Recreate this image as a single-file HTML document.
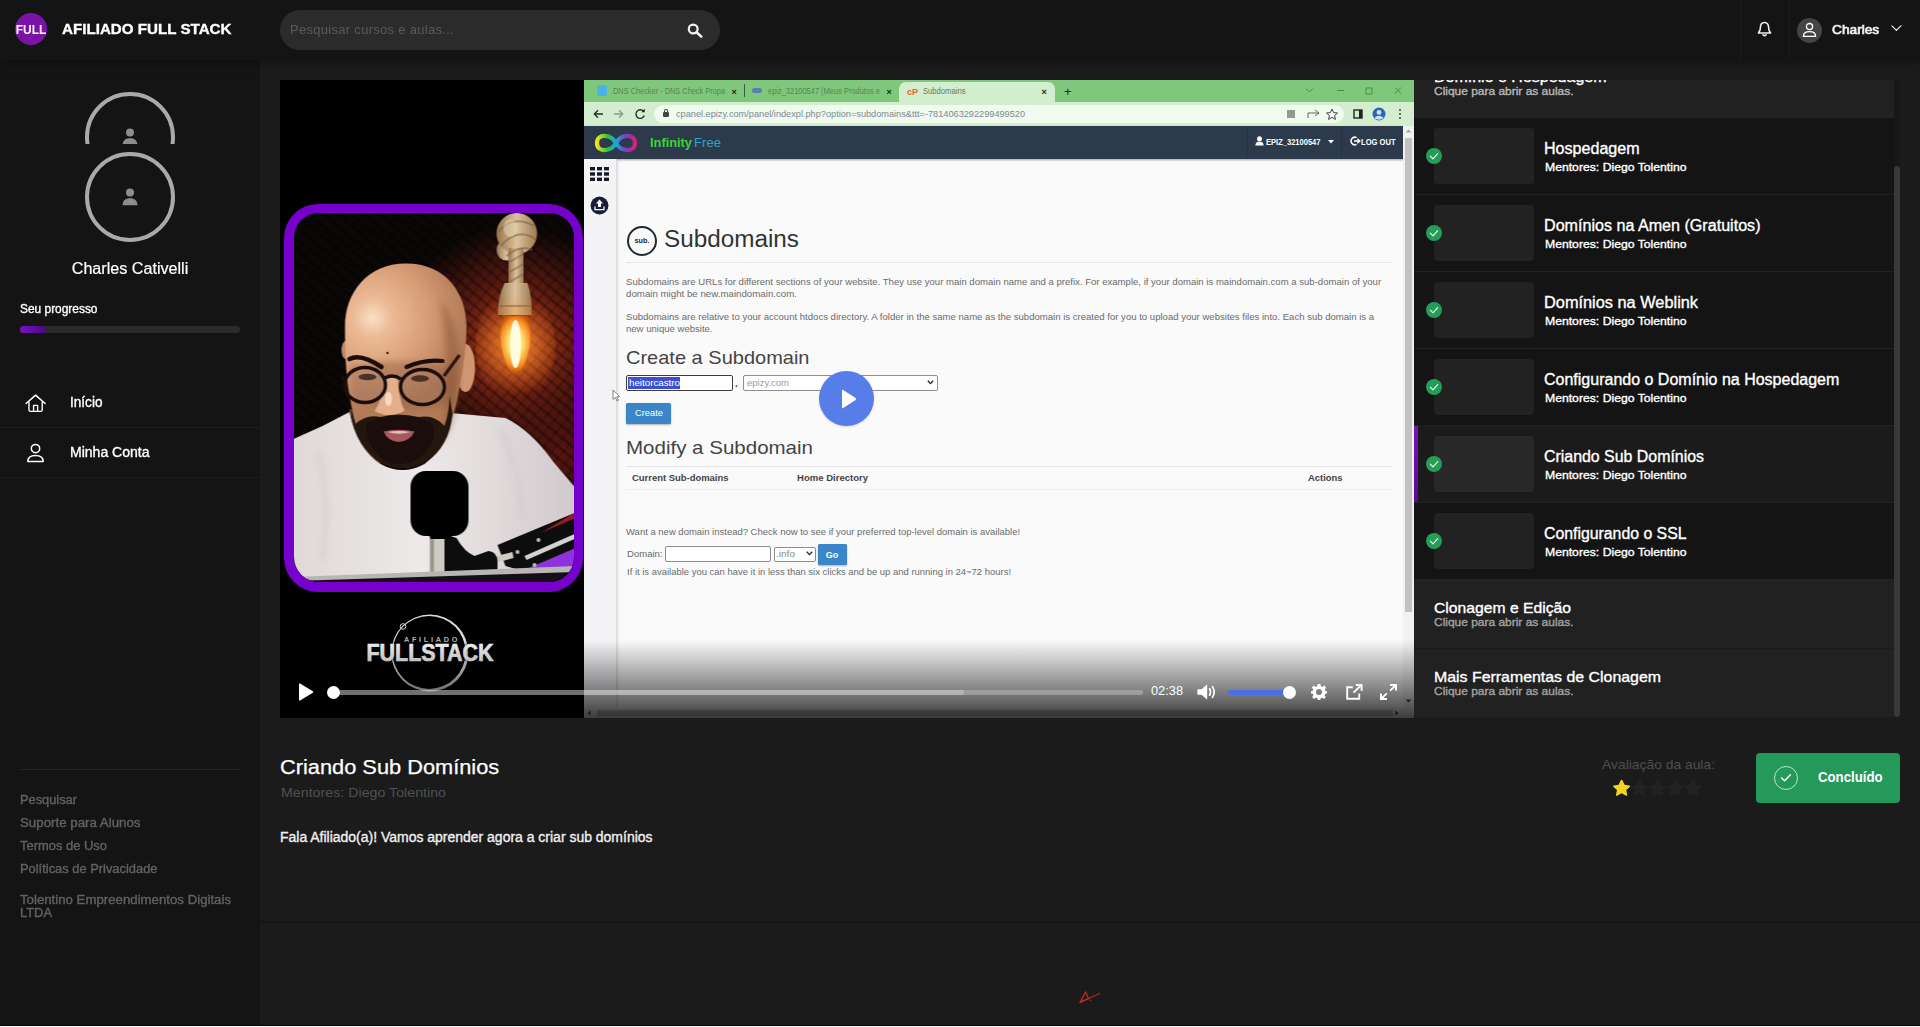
<!DOCTYPE html>
<html lang="pt-BR">
<head>
<meta charset="utf-8">
<title>Criando Sub Domínios - Afiliado Full Stack</title>
<style>
*{box-sizing:border-box}
html,body{margin:0;padding:0}
body{width:1920px;height:1027px;overflow:hidden;position:relative;background:#1b1b1b;font-family:"Liberation Sans",sans-serif;color:#fff}
.a{position:absolute}
.t{position:absolute;white-space:nowrap;line-height:1;transform-origin:0 0;display:block;-webkit-text-stroke:.35px}
.ns .t{-webkit-text-stroke:0}
svg{position:absolute;overflow:visible}
.pg{position:absolute;width:1920px;height:1027px}
</style>
</head>
<body>
<!-- main footer separator & bottom edge -->
<div class="a" style="left:260px;top:921px;width:1660px;height:2px;background:#151515"></div>
<svg style="left:1079px;top:990px" width="22" height="14" viewBox="0 0 22 14"><path d="M1 12.5 L6.5 2 L9.5 8.5 Z" fill="none" stroke="#b02a2a" stroke-width="1.5" stroke-linejoin="round"/><path d="M1 12.5 L21 3.2" stroke="#b02a2a" stroke-width="1.1"/><circle cx="11.5" cy="10.3" r=".8" fill="#b02a2a"/></svg>
<!-- HEADER -->
<header class="a" style="left:0;top:0;width:1920px;height:60px;background:#141414;box-shadow:0 2px 10px rgba(0,0,0,.35);z-index:5">
  <div class="a" style="left:15px;top:13px;width:32px;height:32px;border-radius:50%;background:#7c12a6"></div>
  <span class="t" style="left:31px;top:24px;font-size:12.5px;color:#fff;font-weight:700;-webkit-text-stroke:0;transform:translateX(-50%) scaleX(0.9551);transform-origin:50% 0;">FULL</span>
  <span class="t" style="left:62px;top:21px;font-size:15px;color:#fff;font-weight:700;-webkit-text-stroke:0;transform:scaleX(1.0104);-webkit-text-stroke:.35px;">AFILIADO FULL STACK</span>
  <div class="a" style="left:280px;top:10px;width:440px;height:40px;border-radius:20px;background:#2b2b2b"></div>
  <span class="t" style="left:290px;top:23px;font-size:13px;color:#5a5a5a;letter-spacing:0.3px;transform:scaleX(0.9989);-webkit-text-stroke:0;">Pesquisar cursos e aulas...</span>
  <svg style="left:687px;top:23px" width="16" height="15" viewBox="0 0 16 15"><circle cx="6.2" cy="6" r="4.4" fill="none" stroke="#f4f4f4" stroke-width="2.2"/><path d="M9.6 9.2 L14.3 13.6" stroke="#f4f4f4" stroke-width="2.6" stroke-linecap="round"/></svg>
  <div class="a" style="left:1740px;top:0;width:1px;height:60px;background:#1d1d1d"></div>
  <div class="a" style="left:1789px;top:0;width:1px;height:60px;background:#1d1d1d"></div>
  <svg style="left:1756.5px;top:20.6px" width="15" height="16.5" viewBox="0 0 16 18"><path d="M8 1.6 C4.7 1.6 3.5 4.4 3.5 7.4 C3.5 10.4 2.8 11.6 1.4 13 L14.6 13 C13.2 11.6 12.5 10.4 12.5 7.4 C12.5 4.4 11.3 1.6 8 1.6 Z" fill="none" stroke="#f2f2f2" stroke-width="1.7" stroke-linejoin="round"/><path d="M6.3 15 Q8 17 9.7 15" fill="none" stroke="#f2f2f2" stroke-width="1.7" stroke-linecap="round"/></svg>
  <div class="a" style="left:1797px;top:18px;width:25px;height:25px;border-radius:50%;background:#444"></div>
  <svg style="left:1802px;top:22px" width="15" height="16" viewBox="0 0 15 16"><circle cx="7.5" cy="4.6" r="3.1" fill="none" stroke="#fff" stroke-width="1.3"/><path d="M1.4 14.4 C1.4 10.9 4 9.6 7.5 9.6 C11 9.6 13.6 10.9 13.6 14.4 Z" fill="none" stroke="#fff" stroke-width="1.3" stroke-linejoin="round"/></svg>
  <span class="t" style="left:1831.7px;top:24px;font-size:12px;color:#f0f0f0;transform:scaleX(1.1415);-webkit-text-stroke:.65px;">Charles</span>
  <svg style="left:1890.6px;top:25.3px" width="10.8" height="7.2" viewBox="0 0 12 8"><path d="M1 1 L6 6 L11 1" fill="none" stroke="#f2f2f2" stroke-width="1.3" stroke-linecap="round" stroke-linejoin="round"/></svg>
</header>
<!-- SIDEBAR -->
<aside class="a" style="left:0;top:60px;width:260px;height:967px;background:#141414;z-index:2">
 <div class="pg" style="left:0;top:-60px">
  <div class="a" style="left:85px;top:92px;width:90px;height:52px;overflow:hidden">
    <div class="a" style="left:0;top:0;width:90px;height:90px;border-radius:50%;border:4px solid #a9a9a9"></div>
    <svg style="left:37px;top:36px" width="16" height="18" viewBox="0 0 16 18"><circle cx="8" cy="4.4" r="4" fill="#8d8d8d"/><path d="M0.6 17.5 C0.6 12.5 3.5 10.3 8 10.3 C12.5 10.3 15.4 12.5 15.4 17.5 Z" fill="#8d8d8d"/></svg>
  </div>
  <div class="a" style="left:85px;top:152px;width:90px;height:90px;border-radius:50%;border:4px solid #a9a9a9"></div>
  <svg style="left:122px;top:188px" width="16" height="18" viewBox="0 0 16 18"><circle cx="8" cy="4.4" r="4" fill="#8d8d8d"/><path d="M0.6 17.2 C0.6 12.5 3.5 10.3 8 10.3 C12.5 10.3 15.4 12.5 15.4 17.2 Z" fill="#8d8d8d"/></svg>
  <span class="t" style="left:130.2px;top:261px;font-size:16px;color:#fff;transform:translateX(-50%) scaleX(1.0078);transform-origin:50% 0;-webkit-text-stroke:.2px;">Charles Cativelli</span>
  <span class="t" style="left:20px;top:303px;font-size:12.5px;color:#fff;transform:scaleX(0.9533);">Seu progresso</span>
  <div class="a" style="left:20px;top:326px;width:220px;height:7px;border-radius:4px;background:#2b2b2b"></div>
  <div class="a" style="left:20px;top:326px;width:26px;height:7px;border-radius:4px 0 0 4px;background:linear-gradient(90deg,#7a10c8,#4a0a80)"></div>
  <div class="a" style="left:0;top:427px;width:260px;height:1px;background:#1e1e1e"></div>
  <div class="a" style="left:0;top:477px;width:260px;height:1px;background:#1e1e1e"></div>
  <svg style="left:24.8px;top:393.6px" width="21.2" height="18.6" viewBox="0 0 23 20"><path d="M1.2 10.2 L11.5 1.2 L21.8 10.2" fill="none" stroke="#fff" stroke-width="1.65" stroke-linecap="round" stroke-linejoin="round"/><path d="M4.3 8.2 L4.3 17 Q4.3 18.8 6.1 18.8 L16.9 18.8 Q18.7 18.8 18.7 17 L18.7 8.2" fill="none" stroke="#fff" stroke-width="1.5" stroke-linejoin="round"/><path d="M9.3 18.8 L9.3 12.3 L13.7 12.3 L13.7 18.8" fill="none" stroke="#fff" stroke-width="1.5" stroke-linejoin="round"/></svg>
  <span class="t" style="left:70px;top:395px;font-size:14px;color:#fff;transform:scaleX(0.9713);">Início</span>
  <svg style="left:26px;top:443px" width="19" height="20" viewBox="0 0 19 20"><circle cx="9.5" cy="5.6" r="4.2" fill="none" stroke="#fff" stroke-width="1.5"/><path d="M1.8 18.6 C1.8 14.2 5 12.4 9.5 12.4 C14 12.4 17.2 14.2 17.2 18.6 Z" fill="none" stroke="#fff" stroke-width="1.5" stroke-linejoin="round"/></svg>
  <span class="t" style="left:70px;top:445px;font-size:14px;color:#fff;transform:scaleX(1.0015);">Minha Conta</span>
  <div class="a" style="left:20px;top:769px;width:220px;height:1px;background:#272727"></div>
  <span class="t" style="left:20px;top:794px;font-size:12.5px;color:#626262;transform:scaleX(1.0255);">Pesquisar</span>
  <span class="t" style="left:20px;top:817px;font-size:12.5px;color:#626262;transform:scaleX(1.0638);">Suporte para Alunos</span>
  <span class="t" style="left:20px;top:840px;font-size:12.5px;color:#626262;transform:scaleX(1.0350);">Termos de Uso</span>
  <span class="t" style="left:20px;top:863px;font-size:12.5px;color:#626262;transform:scaleX(1.0307);">Políticas de Privacidade</span>
  <span class="t" style="left:20px;top:894px;font-size:12.5px;color:#626262;transform:scaleX(1.0582);">Tolentino Empreendimentos Digitais</span>
  <span class="t" style="left:20px;top:907px;font-size:12.5px;color:#626262;transform:scaleX(1.0315);">LTDA</span>
 </div>
</aside>
<div class="a" style="left:0;top:1025px;width:1920px;height:1px;background:#050505;z-index:9"></div>
<div class="a" style="left:0;top:1026px;width:1920px;height:1px;background:#fff;z-index:9"></div>
<!-- VIDEO -->
<div class="a" style="left:280px;top:80px;width:1134px;height:638px;background:#000;overflow:hidden">
 <div class="pg ns" style="left:-280px;top:-80px">
  <!-- browser screenshot -->
  <div class="a" style="left:584px;top:80px;width:830px;height:638px;background:#fafafa"></div>
  <div class="a" style="left:584px;top:80px;width:830px;height:22px;background:#7fc87b"></div>
  <div class="a" style="left:584px;top:102px;width:830px;height:24px;background:#d3edcf"></div>
  <div class="a" style="left:899px;top:82px;width:156px;height:21px;background:#d3edcf;border-radius:7px 7px 0 0"></div>
  <div class="a" style="left:654px;top:105px;width:690px;height:18px;border-radius:9px;background:#f1faef"></div>
  <!-- tabs -->
  <div class="a" style="left:597px;top:85px;width:10px;height:11px;border-radius:3px;background:#4ab3e8"></div>
  <span class="t" style="left:612.5px;top:87px;font-size:8.5px;color:#5e7d5c;transform:scaleX(0.8685);">DNS Checker - DNS Check Propa</span>
  <span class="t" style="left:731.5px;top:88px;font-size:9px;color:#1c2a1c;font-weight:700;-webkit-text-stroke:0;">×</span>
  <div class="a" style="left:744px;top:84px;width:1px;height:13px;background:#3c5c3a"></div>
  <div class="a" style="left:752px;top:88px;width:10px;height:5px;border-radius:3px;background:#5a7fb0"></div>
  <span class="t" style="left:767.5px;top:87px;font-size:8.5px;color:#5e7d5c;transform:scaleX(0.8779);">epiz_32100547 (Meus Produtos e</span>
  <span class="t" style="left:886.5px;top:88px;font-size:9px;color:#1c2a1c;font-weight:700;-webkit-text-stroke:0;">×</span>
  <span class="t" style="left:907px;top:88px;font-size:9px;color:#e8602c;font-weight:700;-webkit-text-stroke:0;">cP</span>
  <span class="t" style="left:922.5px;top:87px;font-size:8.5px;color:#5e7d5c;transform:scaleX(0.8995);">Subdomains</span>
  <span class="t" style="left:1041.5px;top:88px;font-size:9px;color:#1c2a1c;font-weight:700;-webkit-text-stroke:0;">×</span>
  <span class="t" style="left:1064px;top:85px;font-size:13px;color:#1c2a1c;">+</span>
  <svg style="left:1303px;top:86px" width="100" height="10" viewBox="0 0 100 10"><path d="M3 2.5 L6.5 6 L10 2.5 M34 4.5 L41 4.5 M63 2 L69 2 L69 8 L63 8 Z M92 1.5 L98 7.5 M98 1.5 L92 7.5" fill="none" stroke="#4f8a4c" stroke-width="1"/></svg>
  <!-- toolbar icons -->
  <svg style="left:592px;top:107px" width="56" height="14" viewBox="0 0 56 14"><path d="M11 7 L2.5 7 M6 3.2 L2.3 7 L6 10.8" fill="none" stroke="#2a2a2a" stroke-width="1.3"/><path d="M22 7 L30.5 7 M27 3.2 L30.7 7 L27 10.8" fill="none" stroke="#8a9a88" stroke-width="1.3"/><path d="M51.5 4.2 A4.3 4.3 0 1 0 52.3 8.6" fill="none" stroke="#2a2a2a" stroke-width="1.4"/><path d="M52.8 1.8 L52.8 5.2 L49.4 5.2 Z" fill="#2a2a2a"/></svg>
  <div class="a" style="left:663px;top:112px;width:6px;height:5px;border-radius:1px;background:#444"></div>
  <div class="a" style="left:664px;top:109px;width:4px;height:5px;border-radius:2px 2px 0 0;border:1px solid #444;border-bottom:0"></div>
  <span class="t" style="left:676px;top:110px;font-size:9px;color:#7b8a90;transform:scaleX(1.0203);">cpanel.epizy.com/panel/indexpl.php?option=subdomains&amp;ttt=-7814063292299499520</span>
  <svg style="left:1284px;top:107px" width="125" height="14" viewBox="0 0 125 14"><rect x="3" y="3" width="8" height="8" fill="#8f9b8f"/><path d="M24 11 L24 6 L28 6 M31 3 L35 6 L31 9 M35 6 L28 6" fill="none" stroke="#5d6a5d" stroke-width="1"/><path d="M48 2 L49.6 5.6 L53.5 6 L50.6 8.6 L51.4 12.4 L48 10.4 L44.6 12.4 L45.4 8.6 L42.5 6 L46.4 5.6 Z" fill="none" stroke="#444" stroke-width="1"/><rect x="70" y="3" width="8" height="8" fill="none" stroke="#222" stroke-width="1.4"/><rect x="75" y="3" width="3" height="8" fill="#222"/><circle cx="95" cy="7" r="6.5" fill="#2b66b8"/><circle cx="95" cy="5.4" r="2.4" fill="#cfe0f5"/><path d="M90.4 11 Q95 6.4 99.6 11 Q95 14.4 90.4 11 Z" fill="#cfe0f5"/><circle cx="116" cy="3" r="1" fill="#444"/><circle cx="116" cy="7" r="1" fill="#444"/><circle cx="116" cy="11" r="1" fill="#444"/></svg>
  <!-- cpanel navbar -->
  <div class="a" style="left:584px;top:126px;width:819px;height:33px;background:#2c3a4b;box-shadow:0 1px 2px rgba(0,0,0,.35)"></div>
  <svg style="left:593px;top:131px" width="46" height="24" viewBox="0 0 46 24"><defs><linearGradient id="inf" x1="0" x2="1"><stop offset="0" stop-color="#f2e21a"/><stop offset=".28" stop-color="#2fc23a"/><stop offset=".5" stop-color="#1aa6e0"/><stop offset=".75" stop-color="#7a3fc0"/><stop offset="1" stop-color="#d81f7a"/></linearGradient></defs><path d="M23 12 C18 3 4 2 4 12 C4 22 18 21 23 12 C28 3 42 2 42 12 C42 22 28 21 23 12 Z" fill="none" stroke="url(#inf)" stroke-width="4.2"/></svg>
  <span class="t" style="left:650px;top:137px;font-size:12.5px;color:#3fd23a;font-weight:700;-webkit-text-stroke:0;transform:scaleX(1.0252);">Infinity</span>
  <span class="t" style="left:694px;top:137px;font-size:12.5px;color:#2aa6c8;transform:scaleX(1.0505);">Free</span>
  <div class="a" style="left:1247px;top:127px;width:1px;height:31px;background:#263342"></div>
  <div class="a" style="left:1341px;top:127px;width:1px;height:31px;background:#263342"></div>
  <svg style="left:1255px;top:136px" width="9" height="10" viewBox="0 0 9 10"><circle cx="4.5" cy="2.8" r="2.5" fill="#fff"/><path d="M0.3 9.6 Q0.6 5.6 4.5 5.6 Q8.4 5.6 8.7 9.6 Z" fill="#fff"/></svg>
  <span class="t" style="left:1265.5px;top:138px;font-size:8.5px;color:#fff;font-weight:700;-webkit-text-stroke:0;transform:scaleX(0.8872);">EPIZ_32100547</span>
  <svg style="left:1328px;top:140px" width="6" height="4" viewBox="0 0 6 4"><path d="M0 0 L6 0 L3 3.6 Z" fill="#fff"/></svg>
  <svg style="left:1350px;top:136px" width="10" height="10" viewBox="0 0 10 10"><path d="M6.5 1.6 A3.8 3.8 0 1 0 6.5 8.4" fill="none" stroke="#fff" stroke-width="1.6"/><path d="M4 5 L9.6 5 M7.4 2.8 L9.8 5 L7.4 7.2" fill="none" stroke="#fff" stroke-width="1.4"/></svg>
  <span class="t" style="left:1360.5px;top:138px;font-size:8.5px;color:#fff;font-weight:700;-webkit-text-stroke:0;transform:scaleX(0.8911);">LOG OUT</span>
  <!-- left rail -->
  <div class="a" style="left:584px;top:159px;width:33px;height:549px;background:#f4f3f6;border-right:1px solid #dedde0;box-shadow:1px 0 2px rgba(0,0,0,.12)"></div>
  <svg style="left:590px;top:166px" width="19" height="16" viewBox="0 0 19 16"><g fill="#151b26"><rect x="0" y="1" width="5" height="3.4"/><rect x="7" y="1" width="5" height="3.4"/><rect x="14" y="1" width="5" height="3.4"/><rect x="0" y="6.3" width="5" height="3.4"/><rect x="7" y="6.3" width="5" height="3.4"/><rect x="14" y="6.3" width="5" height="3.4"/><rect x="0" y="11.6" width="5" height="3.4"/><rect x="7" y="11.6" width="5" height="3.4"/><rect x="14" y="11.6" width="5" height="3.4"/></g></svg>
  <svg style="left:590px;top:196px" width="19" height="19" viewBox="0 0 19 19"><circle cx="9.5" cy="9.5" r="9" fill="#1b1c3a"/><path d="M9.5 3.4 L13 7.6 L11 7.6 L11 11 L8 11 L8 7.6 L6 7.6 Z" fill="#fff"/><path d="M5 10.5 L5 13.6 L14 13.6 L14 10.5" fill="none" stroke="#fff" stroke-width="1.3"/></svg>
  <!-- page content -->
  <div class="a" style="left:627px;top:226px;width:30px;height:30px;border-radius:50%;border:2.2px solid #1e2a30"></div>
  <span class="t" style="left:642px;top:237px;font-size:7.5px;color:#1e2a30;font-weight:700;-webkit-text-stroke:0;transform:translateX(-50%) scaleX(0.9728);transform-origin:50% 0;">sub.</span>
  <span class="t" style="left:664px;top:228px;font-size:23.5px;color:#333;transform:scaleX(1.0334);">Subdomains</span>
  <div class="a" style="left:626px;top:262px;width:767px;height:1px;background:#e6e6e6"></div>
  <span class="t" style="left:626.3px;top:278px;font-size:9px;color:#6b6b6b;transform:scaleX(1.0620);">Subdomains are URLs for different sections of your website. They use your main domain name and a prefix. For example, if your domain is maindomain.com a sub-domain of your</span>
  <span class="t" style="left:626.3px;top:290px;font-size:9px;color:#6b6b6b;transform:scaleX(1.0784);">domain might be new.maindomain.com.</span>
  <span class="t" style="left:626.3px;top:313px;font-size:9px;color:#6b6b6b;transform:scaleX(1.0623);">Subdomains are relative to your account htdocs directory. A folder in the same name as the subdomain is created for you to upload your websites files into. Each sub domain is a</span>
  <span class="t" style="left:626.3px;top:325px;font-size:9px;color:#6b6b6b;transform:scaleX(1.0607);">new unique website.</span>
  <span class="t" style="left:626.3px;top:348px;font-size:19px;color:#444;transform:scaleX(1.0529);">Create a Subdomain</span>
  <div class="a" style="left:626px;top:375px;width:107px;height:15.5px;border:1.5px solid #3c3c3c;border-radius:2px;background:#fff"></div>
  <div class="a" style="left:628px;top:377px;width:52px;height:11.5px;background:#3c4fd0"></div>
  <span class="t" style="left:628.6px;top:379px;font-size:9px;color:#fff;transform:scaleX(1.0847);">heitorcastro</span>
  <span class="t" style="left:735px;top:379px;font-size:10px;color:#444;font-weight:700;-webkit-text-stroke:0;">.</span>
  <div class="a" style="left:743px;top:375px;width:195px;height:15.5px;border:1px solid #8f8f8f;border-radius:2px;background:#fff"></div>
  <span class="t" style="left:746.5px;top:379px;font-size:9px;color:#9a9a9a;transform:scaleX(1.0541);">epizy.com</span>
  <svg style="left:927px;top:380px" width="7" height="5" viewBox="0 0 7 5"><path d="M.8 .8 L3.5 3.6 L6.2 .8" fill="none" stroke="#222" stroke-width="1.3"/></svg>
  <svg style="left:612px;top:389px" width="9" height="13" viewBox="0 0 9 13"><path d="M1 1 L1 10.5 L3.3 8.3 L5 12 L6.3 11.4 L4.7 7.8 L7.8 7.6 Z" fill="#fff" stroke="#666" stroke-width=".8"/></svg>
  <div class="a" style="left:626px;top:402.5px;width:45px;height:21.5px;background:#3a86c8;border-radius:1.5px;box-shadow:0 1px 2px rgba(0,0,0,.3)"></div>
  <span class="t" style="left:648.5px;top:408px;font-size:9.5px;color:#fff;transform:translateX(-50%) scaleX(0.9820);transform-origin:50% 0;">Create</span>
  <span class="t" style="left:626.3px;top:438px;font-size:19px;color:#444;transform:scaleX(1.0796);">Modify a Subdomain</span>
  <div class="a" style="left:626px;top:465.5px;width:767px;height:1px;background:#e6e6e6"></div>
  <span class="t" style="left:631.5px;top:474px;font-size:9px;color:#444;font-weight:700;-webkit-text-stroke:0;transform:scaleX(1.0489);">Current Sub-domains</span>
  <span class="t" style="left:797.2px;top:474px;font-size:9px;color:#444;font-weight:700;-webkit-text-stroke:0;transform:scaleX(1.0594);">Home Directory</span>
  <span class="t" style="left:1308px;top:474px;font-size:9px;color:#444;font-weight:700;-webkit-text-stroke:0;transform:scaleX(1.0455);">Actions</span>
  <div class="a" style="left:626px;top:489px;width:767px;height:1px;background:#efefef"></div>
  <span class="t" style="left:626.3px;top:528px;font-size:9px;color:#6b6b6b;transform:scaleX(1.0540);">Want a new domain instead? Check now to see if your preferred top-level domain is available!</span>
  <span class="t" style="left:626.5px;top:550px;font-size:9px;color:#6a6a6a;transform:scaleX(1.0594);">Domain:</span>
  <div class="a" style="left:664.5px;top:546.3px;width:106.5px;height:15.5px;border:1px solid #8c8c8c;border-radius:2px;background:#fff"></div>
  <div class="a" style="left:773.5px;top:546.5px;width:42.5px;height:15px;border:1px solid #8c8c8c;border-radius:2px;background:#fff"></div>
  <span class="t" style="left:776px;top:550px;font-size:9px;color:#8a8a8a;transform:scaleX(1.1170);">.info</span>
  <svg style="left:806px;top:551px" width="7" height="5" viewBox="0 0 7 5"><path d="M.8 .8 L3.5 3.6 L6.2 .8" fill="none" stroke="#222" stroke-width="1.3"/></svg>
  <div class="a" style="left:817.8px;top:543.8px;width:29px;height:21.7px;background:#3a86c8;border-radius:1.5px;box-shadow:0 1px 2px rgba(0,0,0,.3)"></div>
  <span class="t" style="left:832.3px;top:550px;font-size:9.5px;color:#fff;font-weight:700;-webkit-text-stroke:0;transform:translateX(-50%) scaleX(0.9475);transform-origin:50% 0;">Go</span>
  <span class="t" style="left:626.5px;top:568px;font-size:9px;color:#6b6b6b;transform:scaleX(1.0508);">If it is available you can have it in less than six clicks and be up and running in 24~72 hours!</span>
  <!-- scrollbars -->
  <div class="a" style="left:1403px;top:126px;width:11px;height:592px;background:#f1f1f1"></div>
  <div class="a" style="left:1405px;top:138px;width:7px;height:474px;background:#c2c2c2"></div>
  <svg style="left:1405px;top:129px" width="7" height="4" viewBox="0 0 7 4"><path d="M0.5 3.6 L3.5 .4 L6.5 3.6 Z" fill="#a5a5a5"/></svg>
  <div class="a" style="left:584px;top:708px;width:819px;height:10px;background:#f1f1f1"></div>
  <div class="a" style="left:597px;top:710px;width:796px;height:6px;background:#c2c2c2"></div>
  <svg style="left:587px;top:710px" width="4" height="6" viewBox="0 0 4 6"><path d="M3.6 .4 L.4 3 L3.600 5.600 Z" fill="#505050"/></svg>
  <svg style="left:1395px;top:710px" width="4" height="6" viewBox="0 0 4 6"><path d="M.4 .4 L3.600 3 L.4 5.600 Z" fill="#505050"/></svg>
  <svg style="left:1405px;top:699px" width="7" height="4" viewBox="0 0 7 4"><path d="M0.5 .4 L3.5 3.6 L6.5 .4 Z" fill="#505050"/></svg>
  <!-- webcam frame -->
  <div class="a" style="left:284px;top:204px;width:299px;height:388px;border-radius:34px;background:#7600cc"></div>
  <div class="a" style="left:293.5px;top:213px;width:280.5px;height:369px;border-radius:25px;overflow:hidden;background:#0a0706">
   <svg style="left:0;top:0" width="280.5" height="369" viewBox="293.5 213 280.5 369">
    <defs>
     <radialGradient id="wg" cx="515" cy="345" r="120" gradientUnits="userSpaceOnUse"><stop offset="0" stop-color="#c04a1c"/><stop offset=".25" stop-color="#8e2c16"/><stop offset=".5" stop-color="#5c1a10"/><stop offset=".8" stop-color="#2c0e0b"/><stop offset="1" stop-color="#0a0706"/></radialGradient>
     <radialGradient id="wg2" cx="560" cy="455" r="80" gradientUnits="userSpaceOnUse"><stop offset="0" stop-color="#5a1610"/><stop offset="1" stop-color="#5a1610" stop-opacity="0"/></radialGradient>
     <pattern id="tx" width="9" height="9" patternUnits="userSpaceOnUse" patternTransform="rotate(40)"><rect width="9" height="9" fill="none"/><rect width="9" height="3" fill="#000" opacity=".28"/><rect width="3" height="9" fill="#000" opacity=".14"/></pattern>
     <radialGradient id="sk" cx="372" cy="318" r="95" gradientUnits="userSpaceOnUse"><stop offset="0" stop-color="#fbe0c6"/><stop offset=".2" stop-color="#ecbb96"/><stop offset=".55" stop-color="#d89f78"/><stop offset="1" stop-color="#b27a57"/></radialGradient>
     <linearGradient id="sh" x1="0" x2="1" y1="0" y2="0"><stop offset="0" stop-color="#dfd9d9"/><stop offset=".45" stop-color="#eeeae9"/><stop offset="1" stop-color="#d2c9cc"/></linearGradient>
     <radialGradient id="bl" cx="515" cy="343" r="30" gradientUnits="userSpaceOnUse" gradientTransform="translate(515 343) scale(.62 1) translate(-515 -343)"><stop offset="0" stop-color="#fffbd8"/><stop offset=".45" stop-color="#ffd862"/><stop offset=".8" stop-color="#f68a24"/><stop offset="1" stop-color="#c0500e"/></radialGradient>
     <radialGradient id="gl" cx="515" cy="346" r="50" gradientUnits="userSpaceOnUse"><stop offset="0" stop-color="#ff9a3a" stop-opacity=".85"/><stop offset="1" stop-color="#ff7a20" stop-opacity="0"/></radialGradient>
     <linearGradient id="rp" x1="0" x2="1"><stop offset="0" stop-color="#94744e"/><stop offset=".5" stop-color="#dcc29c"/><stop offset="1" stop-color="#9a7a54"/></linearGradient>
     <filter id="b1" x="-10%" y="-10%" width="120%" height="120%"><feGaussianBlur stdDeviation=".7"/></filter>
     <filter id="b3" x="-20%" y="-20%" width="140%" height="140%"><feGaussianBlur stdDeviation="3"/></filter>
    </defs>
    <rect x="293" y="212" width="282" height="371" fill="#0a0706"/>
    <rect x="293" y="212" width="282" height="371" fill="url(#wg)"/>
    <rect x="293" y="212" width="282" height="371" fill="url(#wg2)"/>
    <rect x="293" y="212" width="282" height="371" fill="url(#tx)"/>
    <g filter="url(#b1)">
     <!-- rope -->
     <ellipse cx="506" cy="250" rx="10" ry="10.5" fill="url(#rp)"/>
     <ellipse cx="516.3" cy="233.5" rx="20.3" ry="20.5" fill="url(#rp)"/>
     <rect x="508" y="248" width="15" height="38" fill="url(#rp)"/>
     <path d="M504 283 L527 283 Q532 298 531 315 L497.500 315 Q497 298 504 283 Z" fill="url(#rp)"/>
     <path d="M498 232 Q512 214 534 226 M500 246 Q518 226 536 240 M506 256 Q520 244 532 250 M509 262 L523 254 M509 272 L523 264 M509 282 L523 274 M499 306 L530 306" stroke="#7a5c3a" stroke-width="2" fill="none" opacity=".55"/>
     <ellipse cx="510" cy="228" rx="7" ry="9" fill="#ecd6b4" opacity=".5"/>
     <!-- bulb -->
     <ellipse cx="515" cy="346" rx="40" ry="56" fill="url(#gl)"/>
     <path d="M503 316 Q498 330 500.500 345 Q504 364 511 373.500 L519 373.500 Q526 364 529.500 345 Q532 330 527 316 Z" fill="url(#bl)"/>
     <ellipse cx="515" cy="344" rx="5.500" ry="24" fill="#fffce0"/>
     <!-- shirt -->
     <path d="M293 439 L322 426 L349 412 Q356 448 380 464 Q402 476 424 464 Q444 448 450 413 L505 418 Q530 430 553 462 L575 488 L575 583 L293 583 Z" fill="url(#sh)"/>
     <path d="M500 430 Q520 470 522 520 M318 450 Q330 500 322 560" stroke="#cfc6c8" stroke-width="5" fill="none" opacity=".55" filter="url(#b3)"/>
     <!-- neck shadow -->
     <path d="M349 410 Q356 448 380 464 L392 440 L360 405 Z" fill="#8a573c"/>
     <!-- ears -->
     <ellipse cx="465" cy="368" rx="9.5" ry="24" fill="#cf9670"/>
     <ellipse cx="345" cy="350" rx="4" ry="9" fill="#c08a66"/>
     <!-- head -->
     <path d="M405.5 263.5 C446 263.5 466 294 466 326 C466 352 462 372 458 392 C454 420 440 448 424 462 Q402 474 380 462 C362 448 352 420 349 395 C345 372 344.5 350 344.5 326 C344.5 294 366 263.5 405.5 263.5 Z" fill="url(#sk)"/>
     <!-- face shadows -->
     <path d="M349 366 Q400 356 456 368 L454 404 Q400 414 351 402 Z" fill="#8e5a40" opacity=".42" filter="url(#b3)"/>
     <path d="M440 300 Q466 330 456 400 Q452 430 440 446 Q452 380 440 300 Z" fill="#8a5638" opacity=".5" filter="url(#b3)"/>
     <path d="M385 376 Q381 402 374 411 Q388 419 404 411 Q398 398 397 376 Z" fill="#e9b690" opacity=".9"/>
     <ellipse cx="388" cy="399" rx="3.500" ry="7" fill="#fbe3cc" opacity=".8"/>
     <!-- beard -->
     <path d="M350 396 Q351 412 355 424 Q366 414 380 417 Q398 412 418 417 Q434 414 444 426 Q449 412 449 396 L452 414 Q449 446 426 462 Q402 474 380 463 Q356 446 351 416 Z" fill="#22130e"/>
     <path d="M366 424 Q382 414 398 417 Q416 414 432 425 Q436 444 418 458 Q400 468 384 460 Q366 446 366 424 Z" fill="#1a0e0b"/>
     <path d="M383 431.500 Q398 428 414 431.500 Q410 441 398 442 Q387 441 383 431.500 Z" fill="#a8585e"/>
     <path d="M387 432 Q398 430 410 432 Q398 435.500 387 432 Z" fill="#f0dcd4" opacity=".8"/>
     <circle cx="387" cy="353" r="1.200" fill="#3a2014"/>
     <!-- brows -->
     <path d="M349 359 Q360 353 381 367" stroke="#1c0f0b" stroke-width="4.600" fill="none" stroke-linecap="round"/>
     <path d="M406 367 Q424 359 442 361" stroke="#1c0f0b" stroke-width="4.200" fill="none" stroke-linecap="round"/>
     <!-- eyes -->
     <ellipse cx="367" cy="377" rx="9" ry="3.200" fill="#2a1810" opacity=".85"/>
     <ellipse cx="419.500" cy="378.500" rx="9" ry="3.200" fill="#2a1810" opacity=".85"/>
     <!-- glasses -->
     <ellipse cx="364.500" cy="385" rx="20.500" ry="17.500" fill="#fff" fill-opacity=".06" stroke="#1a0f0e" stroke-width="3.400"/>
     <ellipse cx="422" cy="387" rx="22" ry="17.500" fill="#fff" fill-opacity=".06" stroke="#1a0f0e" stroke-width="3.400"/>
     <path d="M384.500 378 Q392 373.500 400.500 379" stroke="#1a0f0e" stroke-width="3.400" fill="none"/>
     <path d="M443.500 376 L459 355" stroke="#2e1610" stroke-width="3.200" fill="none"/>
     <path d="M344.500 380 L341 377" stroke="#1a0f0e" stroke-width="3" fill="none"/>
     <!-- purple spill -->
     <path d="M520 572 L574 548 L575 572 Z" fill="#8f33dd"/>
     <!-- mic arm -->
     <path d="M497 545 L574 513 L575 548 L522 571 L505 566 Z" fill="#0e0c0e"/>
     <path d="M524 556 L574 534 L574 539 L526 560 Z" fill="#d6d2d2"/>
     <path d="M574 513 L575 518 L540 533 Z" fill="#c02030" opacity=".8"/>
     <path d="M480 560 L512 552 L513 558 L481 567 Z" fill="#cfcac6"/>
     <circle cx="538" cy="540" r="2" fill="#bbb"/><circle cx="517" cy="552" r="2" fill="#bbb"/><circle cx="534" cy="565" r="2" fill="#bbb"/>
     <!-- mic body -->
     <rect x="429.5" y="530" width="14.5" height="46" fill="#cfccc4"/>
     <rect x="429.5" y="530" width="4" height="46" fill="#9a968e"/>
     <path d="M444 534 L456 538 Q464 552 474 556 L488 551 Q497 552 497 562 L497 572 L444 574 Z" fill="#0b0b0b"/>
     <rect x="410" y="471" width="58" height="65" rx="15" ry="16" fill="#050505"/>
     <path d="M428 533 L452 533 L450 539 L430 539 Z" fill="#050505"/>
     <!-- desk -->
     <path d="M293 577 L575 566 L575 573 L293 584 Z" fill="#b9b5b5"/>
     <path d="M293 581 L575 572 L575 584 L293 584 Z" fill="#151015"/>
    </g>
   </svg>
  </div>
  <!-- FULLSTACK logo -->
  <svg style="left:385px;top:608px" width="90" height="90" viewBox="385 608 90 90"><path fill-rule="evenodd" fill="#dcdcdc" d="M391.3 653 a38.5 38.5 0 1 0 77 0 a38.5 38.5 0 1 0 -77 0 Z M392.6 652.4 a36.5 36.5 0 1 0 73 0 a36.5 36.5 0 1 0 -73 0 Z"/><circle cx="403" cy="626.500" r="2.800" fill="none" stroke="#cfcfcf" stroke-width="1"/></svg>
  <span class="t" style="left:431.6px;top:636px;font-size:7px;color:#b4b4b4;font-weight:700;-webkit-text-stroke:0;letter-spacing:2.6px;transform:translateX(-50%) scaleX(1.0399);transform-origin:50% 0;">AFILIADO</span>
  <span class="t" style="left:429.8px;top:642px;font-size:23.5px;color:#f4f4f4;font-weight:700;-webkit-text-stroke:0;transform:translateX(-50%) scaleX(0.9122);transform-origin:50% 0;-webkit-text-stroke:.7px #f4f4f4;text-shadow:0 0 2px #000,0 0 3px #000;">FULLSTACK</span>
  <!-- plyr controls -->
  <div class="a" style="left:280px;top:640px;width:1134px;height:78px;background:linear-gradient(180deg,rgba(0,0,0,0),rgba(0,0,0,.75))"></div>
  <svg style="left:298px;top:683px" width="16" height="18" viewBox="0 0 16 18"><path d="M1 1.2 Q1 0 2.1 .6 L14.8 8.2 Q15.8 9 14.8 9.8 L2.1 17.4 Q1 18 1 16.8 Z" fill="#fff"/></svg>
  <div class="a" style="left:333px;top:689.5px;width:810px;height:5px;border-radius:2.5px;background:rgba(255,255,255,.25)"></div>
  <div class="a" style="left:333px;top:689.5px;width:631px;height:5px;border-radius:2.5px;background:rgba(255,255,255,.25)"></div>
  <div class="a" style="left:327px;top:685.5px;width:13px;height:13px;border-radius:50%;background:#fff;box-shadow:0 1px 1px rgba(0,0,0,.2)"></div>
  <span class="t" style="left:1150.8px;top:684px;font-size:13px;color:#fff;transform:scaleX(0.9837);">02:38</span>
  <svg style="left:1197px;top:684px" width="20" height="16" viewBox="0 0 20 16"><path d="M1 5.2 L4.6 5.2 L9.4 1 Q10.2 .5 10.2 1.5 L10.2 14.5 Q10.2 15.5 9.4 15 L4.6 10.8 L1 10.8 Q.4 10.8 .4 10.2 L.4 5.8 Q.4 5.2 1 5.2 Z" fill="#fff"/><path d="M12.6 4.8 Q14.6 8 12.6 11.2" fill="none" stroke="#fff" stroke-width="1.7" stroke-linecap="round"/><path d="M15.4 2.6 Q19 8 15.4 13.4" fill="none" stroke="#fff" stroke-width="1.7" stroke-linecap="round"/></svg>
  <div class="a" style="left:1228px;top:689.8px;width:68px;height:5px;border-radius:2.5px;background:#4a6fe8"></div>
  <div class="a" style="left:1283px;top:685.5px;width:13px;height:13px;border-radius:50%;background:#fff"></div>
  <svg style="left:1311px;top:684px" width="16" height="16" viewBox="0 0 16 16"><path d="M6.6 0 L9.4 0 L9.8 2.2 L11.3 2.9 L13.2 1.6 L15.1 3.6 L13.8 5.4 L14.4 7 L16 7.2 L16 9.4 L14.2 9.8 L13.6 11.3 L14.8 13 L13 14.9 L11.2 13.7 L9.7 14.3 L9.3 16 L6.7 16 L6.3 14.3 L4.8 13.7 L3 14.9 L1.2 13 L2.4 11.3 L1.8 9.8 L0 9.4 L0 7.2 L1.6 7 L2.2 5.4 L.9 3.6 L2.8 1.6 L4.7 2.9 L6.2 2.2 Z M8 5 A3 3 0 1 0 8 11 A3 3 0 1 0 8 5 Z" fill="#fff" fill-rule="evenodd"/></svg>
  <svg style="left:1345.5px;top:684px" width="17" height="16" viewBox="0 0 17 16"><path d="M6.8 3.2 L1.2 3.2 L1.2 14.8 L13.2 14.8 L13.2 9.4" fill="none" stroke="#fff" stroke-width="1.9"/><path d="M7.6 8.6 L14.6 1.6 M9.8 1 L15.6 1 L15.6 6.8" fill="none" stroke="#fff" stroke-width="1.9"/></svg>
  <svg style="left:1379.5px;top:684px" width="17" height="16" viewBox="0 0 17 16"><path d="M10 1 L16 1 L16 6.6 M15.6 1.4 L10.2 6.6 M7 15 L1 15 L1 9.4 M1.4 14.6 L6.8 9.4" fill="none" stroke="#fff" stroke-width="1.9"/></svg>
  <!-- big play -->
  <div class="a" style="left:819.2px;top:371.2px;width:55px;height:55px;border-radius:50%;background:#577ee8;box-shadow:0 1px 2px rgba(0,0,0,.15)"></div>
  <svg style="left:840.6px;top:388.7px" width="16" height="20" viewBox="0 0 16 20"><path d="M1 1.6 Q1 .2 2.2 1 L14.6 9 Q15.6 10 14.6 11 L2.2 19 Q1 19.8 1 18.4 Z" fill="#fff"/></svg>
 </div>
</div>
<!-- LESSON PANEL -->
<div class="a" style="left:1414px;top:80px;width:486px;height:638px;background:#141414;overflow:hidden">
 <div class="pg" style="left:-1414px;top:-80px">
  <div class="a" style="left:1414px;top:80px;width:480px;height:38px;background:#212121"></div>
  <span class="t" style="left:1434px;top:69px;font-size:15px;color:#fff;transform:scaleX(1.0664);">Domínio e Hospedagem</span>
  <span class="t" style="left:1434px;top:86px;font-size:11px;color:#b8b8b8;transform:scaleX(1.0865);">Clique para abrir as aulas.</span>
  <div class="a" style="left:1414px;top:194px;width:480px;height:1px;background:#212121"></div>
  <div class="a" style="left:1434px;top:128px;width:100px;height:56px;border-radius:4px;background:#222"></div>
  <svg style="left:1426px;top:148px" width="16" height="16" viewBox="0 0 16 16"><circle cx="8" cy="8" r="8" fill="#259d58"/><path d="M4.3 8.2 L7 10.8 L11.7 5.6" fill="none" stroke="#eaf6ee" stroke-width="1.15" stroke-linecap="round" stroke-linejoin="round"/></svg>
  <span class="t" style="left:1544px;top:141px;font-size:16px;color:#fff;transform:scaleX(1.0045);">Hospedagem</span>
  <span class="t" style="left:1545px;top:162px;font-size:11.5px;color:#fff;transform:scaleX(1.0608);">Mentores: Diego Tolentino</span>
  <div class="a" style="left:1414px;top:271px;width:480px;height:1px;background:#212121"></div>
  <div class="a" style="left:1434px;top:205px;width:100px;height:56px;border-radius:4px;background:#222"></div>
  <svg style="left:1426px;top:225px" width="16" height="16" viewBox="0 0 16 16"><circle cx="8" cy="8" r="8" fill="#259d58"/><path d="M4.3 8.2 L7 10.8 L11.7 5.6" fill="none" stroke="#eaf6ee" stroke-width="1.15" stroke-linecap="round" stroke-linejoin="round"/></svg>
  <span class="t" style="left:1544px;top:218px;font-size:16px;color:#fff;transform:scaleX(1.0061);">Domínios na Amen (Gratuitos)</span>
  <span class="t" style="left:1545px;top:239px;font-size:11.5px;color:#fff;transform:scaleX(1.0608);">Mentores: Diego Tolentino</span>
  <div class="a" style="left:1414px;top:348px;width:480px;height:1px;background:#212121"></div>
  <div class="a" style="left:1434px;top:282px;width:100px;height:56px;border-radius:4px;background:#222"></div>
  <svg style="left:1426px;top:302px" width="16" height="16" viewBox="0 0 16 16"><circle cx="8" cy="8" r="8" fill="#259d58"/><path d="M4.3 8.2 L7 10.8 L11.7 5.6" fill="none" stroke="#eaf6ee" stroke-width="1.15" stroke-linecap="round" stroke-linejoin="round"/></svg>
  <span class="t" style="left:1544px;top:295px;font-size:16px;color:#fff;transform:scaleX(1.0207);">Domínios na Weblink</span>
  <span class="t" style="left:1545px;top:316px;font-size:11.5px;color:#fff;transform:scaleX(1.0608);">Mentores: Diego Tolentino</span>
  <div class="a" style="left:1414px;top:425px;width:480px;height:1px;background:#212121"></div>
  <div class="a" style="left:1434px;top:359px;width:100px;height:56px;border-radius:4px;background:#222"></div>
  <svg style="left:1426px;top:379px" width="16" height="16" viewBox="0 0 16 16"><circle cx="8" cy="8" r="8" fill="#259d58"/><path d="M4.3 8.2 L7 10.8 L11.7 5.6" fill="none" stroke="#eaf6ee" stroke-width="1.15" stroke-linecap="round" stroke-linejoin="round"/></svg>
  <span class="t" style="left:1544px;top:372px;font-size:16px;color:#fff;">Configurando o Domínio na Hospedagem</span>
  <span class="t" style="left:1545px;top:393px;font-size:11.5px;color:#fff;transform:scaleX(1.0608);">Mentores: Diego Tolentino</span>
  <div class="a" style="left:1414px;top:426px;width:480px;height:77px;background:#1b1b1b"></div>
  <div class="a" style="left:1414px;top:426px;width:4px;height:77px;background:linear-gradient(180deg,#7a12b8,#5a0a96)"></div>
  <div class="a" style="left:1414px;top:502px;width:480px;height:1px;background:#212121"></div>
  <div class="a" style="left:1434px;top:436px;width:100px;height:56px;border-radius:4px;background:#282828"></div>
  <svg style="left:1426px;top:456px" width="16" height="16" viewBox="0 0 16 16"><circle cx="8" cy="8" r="8" fill="#259d58"/><path d="M4.3 8.2 L7 10.8 L11.7 5.6" fill="none" stroke="#eaf6ee" stroke-width="1.15" stroke-linecap="round" stroke-linejoin="round"/></svg>
  <span class="t" style="left:1544px;top:449px;font-size:16px;color:#fff;transform:scaleX(0.9940);">Criando Sub Domínios</span>
  <span class="t" style="left:1545px;top:470px;font-size:11.5px;color:#fff;transform:scaleX(1.0608);">Mentores: Diego Tolentino</span>
  <div class="a" style="left:1414px;top:579px;width:480px;height:1px;background:#212121"></div>
  <div class="a" style="left:1434px;top:513px;width:100px;height:56px;border-radius:4px;background:#222"></div>
  <svg style="left:1426px;top:533px" width="16" height="16" viewBox="0 0 16 16"><circle cx="8" cy="8" r="8" fill="#259d58"/><path d="M4.3 8.2 L7 10.8 L11.7 5.6" fill="none" stroke="#eaf6ee" stroke-width="1.15" stroke-linecap="round" stroke-linejoin="round"/></svg>
  <span class="t" style="left:1544px;top:526px;font-size:16px;color:#fff;transform:scaleX(0.9889);">Configurando o SSL</span>
  <span class="t" style="left:1545px;top:547px;font-size:11.5px;color:#fff;transform:scaleX(1.0608);">Mentores: Diego Tolentino</span>
  <div class="a" style="left:1414px;top:580px;width:480px;height:138px;background:#212121"></div>
  <div class="a" style="left:1414px;top:648px;width:480px;height:1px;background:#1b1b1b"></div>
  <span class="t" style="left:1434px;top:600px;font-size:15px;color:#fff;transform:scaleX(1.0465);">Clonagem e Edição</span>
  <span class="t" style="left:1434px;top:617px;font-size:11px;color:#a2a2a2;transform:scaleX(1.0865);">Clique para abrir as aulas.</span>
  <span class="t" style="left:1434px;top:669px;font-size:15px;color:#fff;transform:scaleX(1.0595);">Mais Ferramentas de Clonagem</span>
  <span class="t" style="left:1434px;top:686px;font-size:11px;color:#a2a2a2;transform:scaleX(1.0865);">Clique para abrir as aulas.</span>
  <!-- scrollbar -->
  <div class="a" style="left:1894px;top:80px;width:6px;height:638px;background:#171717"></div>
  <div class="a" style="left:1894px;top:166px;width:6px;height:551px;border-radius:3px;background:#383838"></div>
 </div>
</div>
<div class="a" style="left:1414px;top:717px;width:486px;height:1px;background:#1b1b1b"></div>
<!-- LESSON INFO -->
<span class="t" style="left:280.3px;top:757px;font-size:20.5px;color:#fff;transform:scaleX(1.0628);-webkit-text-stroke:.25px;">Criando Sub Domínios</span>
<span class="t" style="left:281px;top:786px;font-size:13.5px;color:#505050;transform:scaleX(1.0537);-webkit-text-stroke:0;">Mentores: Diego Tolentino</span>
<span class="t" style="left:280px;top:830px;font-size:14px;color:#f0f0f0;transform:scaleX(0.9980);">Fala Afiliado(a)! Vamos aprender agora a criar sub domínios</span>
<span class="t" style="left:1601.5px;top:758px;font-size:13px;color:#4e4e4e;transform:scaleX(1.0660);-webkit-text-stroke:0;">Avaliação da aula:</span>
<svg style="left:1611.4px;top:777.6px" width="97.5" height="21.2" viewBox="0 0 92 20"><defs><path id="st" d="M10 1.6 Q10.5 1.6 10.8 2.2 L12.8 6.4 L17.4 7 Q18.6 7.3 17.8 8.2 L14.4 11.4 L15.3 16 Q15.4 17.2 14.3 16.7 L10 14.4 L5.7 16.7 Q4.6 17.2 4.7 16 L5.6 11.4 L2.2 8.2 Q1.4 7.3 2.6 7 L7.2 6.4 L9.2 2.2 Q9.5 1.6 10 1.6 Z"/></defs><use href="#st" fill="#f6d31f"/><use href="#st" x="16.9" fill="#222"/><use href="#st" x="33.8" fill="#222"/><use href="#st" x="50.7" fill="#222"/><use href="#st" x="67.6" fill="#222"/></svg>
<div class="a" style="left:1756px;top:753px;width:144px;height:50px;border-radius:4px;background:#24995a"></div>
<div class="a" style="left:1773.5px;top:765.5px;width:24.5px;height:24.5px;border-radius:50%;border:1px solid rgba(255,255,255,.7)"></div>
<svg style="left:1780px;top:773px" width="12" height="10" viewBox="0 0 12 10"><path d="M1.6 5 L4.6 7.8 L10.4 1.8" fill="none" stroke="#fff" stroke-width="1.5" stroke-linecap="round" stroke-linejoin="round"/></svg>
<span class="t" style="left:1817.6px;top:770px;font-size:14px;color:#fff;font-weight:700;-webkit-text-stroke:0;transform:scaleX(0.9425);">Concluído</span>
</body>
</html>
